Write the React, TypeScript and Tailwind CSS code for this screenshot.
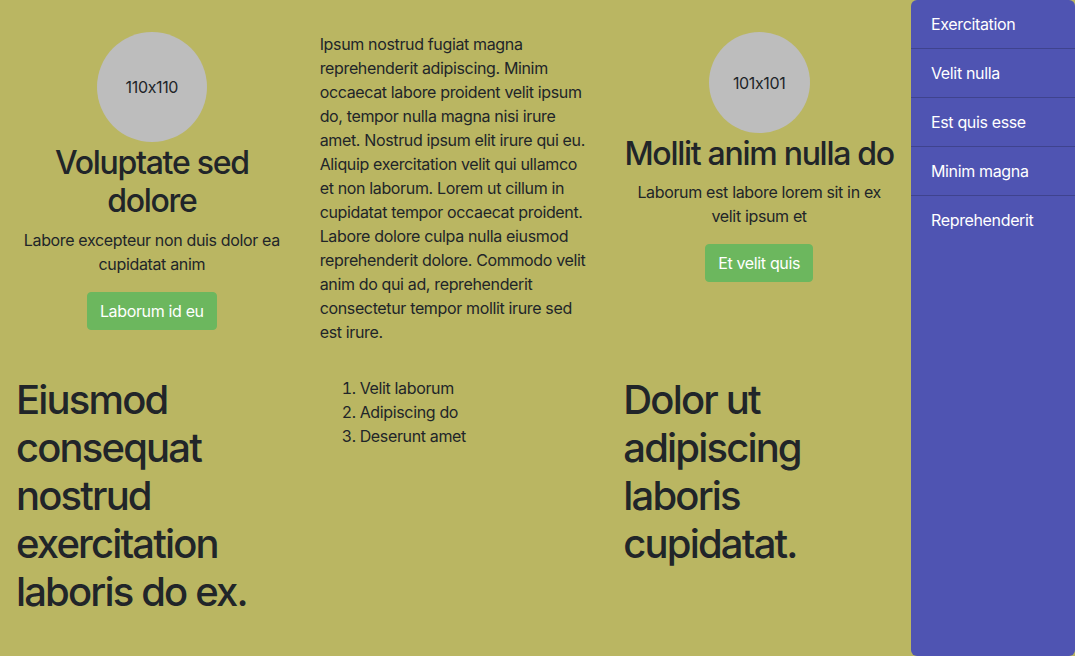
import React from "react";

const menu = ["Exercitation", "Velit nulla", "Est quis esse", "Minim magna", "Reprehenderit"];

function Avatar({ size, label }: { size: string; label: string }) {
  return (
    <div className={`${size} rounded-full bg-[#bdbdbd] flex items-center justify-center text-base text-[#212529]`}>
      {label}
    </div>
  );
}

export default function App() {
  return (
    <div
      className="flex min-h-screen bg-[#bab662] text-[#212529] text-base leading-6 tracking-[-0.022em]"
      style={{ fontFamily: "Inter, 'Noto Sans', sans-serif", fontFeatureSettings: "'calt' 0" }}
    >
      {/* Main */}
      <div className="flex-1">
        <div className="grid grid-cols-3 pt-8 pb-4">
          <div className="px-4 flex flex-col items-center text-center">
            <Avatar size="w-[110px] h-[110px]" label="110x110" />
            <h2 className="text-[32px] leading-[1.2] font-[550] tracking-[-0.04em] pt-0.5 mb-[7px]">Voluptate sed dolore</h2>
            <p className="mb-4">Labore excepteur non duis dolor ea cupidatat anim</p>
            <button className="bg-[#6cb75e] border border-[#6cb75e] text-white rounded px-3 py-1.5">Laborum id eu</button>
          </div>

          <div className="px-4">
            <p className="mb-4">
              Ipsum nostrud fugiat magna reprehenderit adipiscing. Minim occaecat labore proident velit ipsum do,
              tempor nulla magna nisi irure amet. Nostrud ipsum elit irure qui eu. Aliquip exercitation velit qui
              ullamco et non laborum. Lorem ut cillum in cupidatat tempor occaecat proident. Labore dolore culpa nulla
              eiusmod reprehenderit dolore. Commodo velit anim do qui ad, reprehenderit consectetur tempor mollit
              irure sed est irure.
            </p>
          </div>

          <div className="px-4 flex flex-col items-center text-center">
            <Avatar size="w-[101px] h-[101px]" label="101x101" />
            <h2 className="text-[32px] leading-[1.2] font-[550] tracking-[-0.04em] pt-0.5 mb-[7px]">Mollit anim nulla do</h2>
            <p className="mb-4">Laborum est labore lorem sit in ex velit ipsum et</p>
            <button className="bg-[#6cb75e] border border-[#6cb75e] text-white rounded px-3 py-1.5">Et velit quis</button>
          </div>
        </div>

        <div className="grid grid-cols-3">
          <div className="px-4">
            <h1 className="text-[40px] leading-[1.2] font-[550] tracking-[-0.046em]">
              Eiusmod consequat nostrud exercitation laboris do ex.
            </h1>
          </div>
          <div className="px-4">
            <ol className="list-decimal pl-10">
              <li>Velit laborum</li>
              <li>Adipiscing do</li>
              <li>Deserunt amet</li>
            </ol>
          </div>
          <div className="px-4">
            <h1 className="text-[40px] leading-[1.2] font-[550] tracking-[-0.046em]">
              Dolor ut adipiscing laboris cupidatat.
            </h1>
          </div>
        </div>
      </div>

      {/* Sidebar */}
      <div className="w-[164px] shrink-0 bg-[#4f54b2] rounded-md">
        {menu.map((item, i) => (
          <div
            key={item}
            className={`px-5 py-3 text-white ${i < menu.length - 1 ? "border-b border-black/20" : ""}`}
          >
            {item}
          </div>
        ))}
      </div>
    </div>
  );
}
